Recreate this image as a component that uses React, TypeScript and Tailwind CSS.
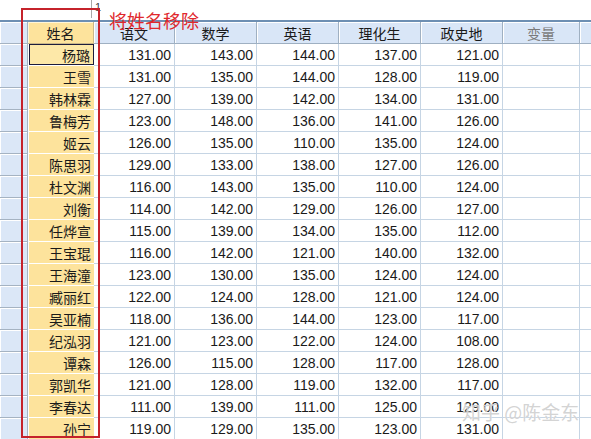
import React from "react";

const rows: [string, number[]][] = [
  ["杨璐", [131, 143, 144, 137, 121]],
  ["王雪", [131, 135, 144, 128, 119]],
  ["韩林霖", [127, 139, 142, 134, 131]],
  ["鲁梅芳", [123, 148, 136, 141, 126]],
  ["姬云", [126, 135, 110, 135, 124]],
  ["陈思羽", [129, 133, 138, 127, 126]],
  ["杜文渊", [116, 143, 135, 110, 124]],
  ["刘衡", [114, 142, 129, 126, 127]],
  ["任烨宣", [115, 139, 134, 135, 112]],
  ["王宝琨", [116, 142, 121, 140, 132]],
  ["王海潼", [123, 130, 135, 124, 124]],
  ["臧丽红", [122, 124, 128, 121, 124]],
  ["吴亚楠", [118, 136, 144, 123, 117]],
  ["纪泓羽", [121, 123, 122, 124, 108]],
  ["谭森", [126, 115, 128, 117, 128]],
  ["郭凯华", [121, 128, 119, 132, 117]],
  ["李春达", [111, 139, 111, 125, 129]],
  ["孙宁", [119, 129, 135, 123, 131]],
];

const headers = ["语文", "数学", "英语", "理化生", "政史地"];
const grid = "grid grid-cols-[28px_66px_81px_82px_82px_82px_82px_77px_1fr]";
const cjk = { fontFamily: '"Noto Sans CJK SC", "Noto Sans", sans-serif' };

export default function App() {
  return (
    <div
      className="relative w-[591px] h-[439px] overflow-hidden bg-white text-[#1a1a1a]"
      style={{ fontFamily: '"Liberation Sans", Arial, "Noto Sans CJK SC", sans-serif' }}
    >
      {/* top strip */}
      <div className="relative h-[20px] bg-white">
        <div className="absolute left-[91px] top-0 h-[18px] w-px bg-[#a8a8a8]" />
        <div className="absolute left-[95px] top-[2px] text-[11px] leading-none text-[#444]">1</div>
      </div>
      <div className="h-[2px] bg-[#6d8fb3]" />
      {/* header */}
      <div className={`${grid} h-[22px]`} style={cjk}>
        <div className="bg-[#dbe7f7] border-r border-b border-[#a5b3c2] shadow-[inset_1px_1px_0_#fff]" />
        <div className="bg-[#fde39c] border-r border-b border-[#c9b68a] shadow-[inset_1px_1px_0_#fff6d8] flex items-center justify-center text-[14px] leading-none">
          姓名
        </div>
        {headers.map((h) => (
          <div
            key={h}
            className="bg-[#d9e6f7] border-r border-b border-[#9fb0c2] shadow-[inset_1px_1px_0_#fff] flex items-center justify-center text-[14px] leading-none"
          >
            {h}
          </div>
        ))}
        <div className="bg-[#d9e6f7] border-r border-b border-[#9fb0c2] shadow-[inset_1px_1px_0_#fff] flex items-center justify-center text-[14px] leading-none text-[#7a7a7a]">
          变量
        </div>
        <div className="bg-[#d9e6f7] border-b border-[#9fb0c2] shadow-[inset_1px_1px_0_#fff]" />
      </div>
      {/* rows */}
      {rows.map(([name, vals], i) => (
        <div key={name} className={`${grid} h-[22px]`}>
          <div className="bg-[#dbe7f7] border-r border-b border-[#a5b3c2] shadow-[inset_1px_1px_0_#fff]" />
          <div className="bg-white pl-px pb-px">
            <div
              className={`h-full flex items-center justify-end pr-[3px] text-[14px] leading-none ${
                i === 0 ? "border border-[#1c1c3c] bg-[#fde8a8]" : "bg-[#fde39c]"
              }`}
              style={cjk}
            >
              {name}
            </div>
          </div>
          {vals.map((v, j) => (
            <div
              key={j}
              className="border-r border-b border-[#c6d5e4] flex items-center justify-end pr-[3px] text-[14px] leading-none"
            >
              {v.toFixed(2)}
            </div>
          ))}
          <div className="border-r border-b border-[#c6d5e4]" />
          <div className="border-b border-[#c6d5e4]" />
        </div>
      ))}

      {/* red annotation box */}
      <div className="absolute left-[21px] top-[8px] w-[79px] h-[430px] border-2 border-[#c5232b]" />
      <div
        className="absolute left-[109px] top-[11px] text-[18px] leading-none text-[#e0282c]"
        style={cjk}
      >
        将姓名移除
      </div>

      {/* watermark */}
      <div
        className="absolute left-[462px] top-[402px] text-[19px] leading-none text-[rgba(200,200,200,0.8)] [text-shadow:0_0_1px_rgba(255,255,255,0.9)]"
        style={cjk}
      >
        知乎 @陈金东
      </div>
    </div>
  );
}
